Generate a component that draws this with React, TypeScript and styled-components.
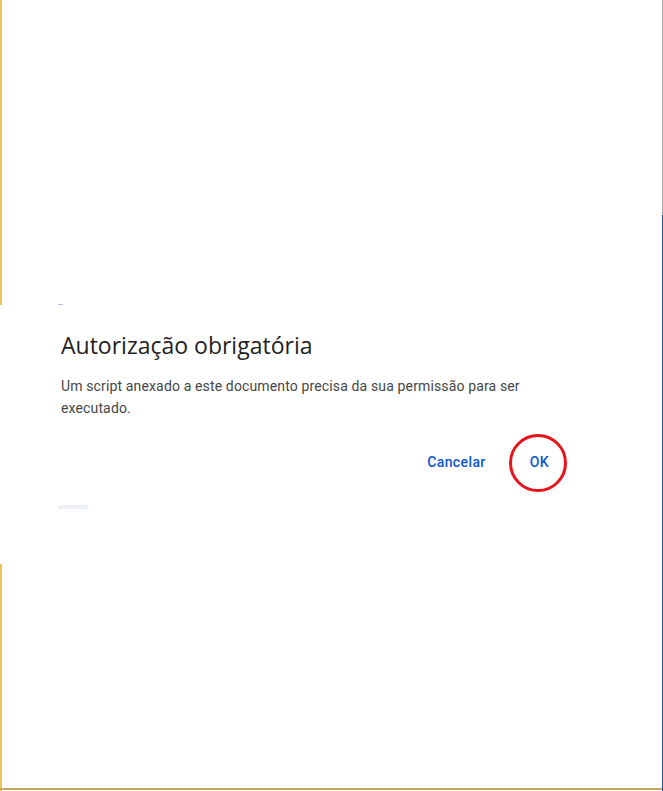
import React from "react";
import styled, { createGlobalStyle } from "styled-components";

const Global = createGlobalStyle`
  html, body { margin: 0; padding: 0; background: #ffffff; }
  body { font-family: Roboto, "Liberation Sans", sans-serif; }
`;

const Frame = styled.div`
  position: relative;
  width: 663px;
  height: 791px;
  background: #ffffff;
  overflow: hidden;
  display: flex;
  flex-direction: column;
`;

const Edge = styled.div<{ $side: "left" | "right" | "bottom"; $from: number; $to: number; $color: string }>`
  position: absolute;
  background: ${(p) => p.$color};
  ${(p) =>
    p.$side === "bottom"
      ? `left: ${p.$from}px; width: ${p.$to - p.$from}px; bottom: 1px; height: 2px;`
      : `${p.$side}: 0; top: ${p.$from}px; height: ${p.$to - p.$from}px; width: ${p.$side === "left" ? 1.5 : 1}px;`}
`;

const Speck = styled.div`
  position: absolute;
  left: 58px;
  top: 304px;
  width: 5px;
  height: 1px;
  background: #b7bccb;
`;

const Dialog = styled.div`
  margin-top: 330px;
  padding: 0 102px 0 61px;
  display: flex;
  flex-direction: column;
`;

const Title = styled.h1`
  margin: 0;
  font-family: "Open Sans", Roboto, sans-serif;
  font-weight: 400;
  font-size: 23px;
  line-height: 30px;
  color: #1f1f1f;
`;

const Body = styled.p`
  margin: 15px 0 0;
  font-family: Roboto, "Liberation Sans", sans-serif;
  font-size: 14px;
  line-height: 22px;
  letter-spacing: 0.14px;
  color: #444746;
  max-width: 480px;
`;

const Actions = styled.div`
  margin-top: 23px;
  display: flex;
  justify-content: flex-end;
  align-items: center;
  gap: 20px;
`;

const TextButton = styled.button`
  position: relative;
  height: 40px;
  padding: 0 12px;
  border: none;
  background: transparent;
  font-family: Roboto, "Liberation Sans", sans-serif;
  font-weight: 500;
  font-size: 14px;
  letter-spacing: 0.4px;
  color: #0b57d0;
  cursor: pointer;
`;

const Ring = styled.span`
  position: absolute;
  left: 50%;
  top: 50%;
  width: 52px;
  height: 52px;
  margin-left: -30px;
  margin-top: -28px;
  border: 3px solid #e8141c;
  border-radius: 50%;
  pointer-events: none;
`;

const Placeholder = styled.div`
  margin: 23px 0 0 -3px;
  width: 30px;
  height: 4px;
  background: #edf1f7;
`;

export default function App() {
  return (
    <>
      <Global />
      <Frame>
        <Edge $side="left" $from={0} $to={305} $color="#eec45a" />
        <Edge $side="left" $from={564} $to={791} $color="#eec45a" />
        <Edge $side="right" $from={0} $to={215} $color="#a9a9a9" />
        <Edge $side="right" $from={215} $to={791} $color="#1d4f9c" />
        <Edge $side="bottom" $from={0} $to={662} $color="#c4a860" />
        <Speck />
        <Dialog>
          <Title>Autorização obrigatória</Title>
          <Body>Um script anexado a este documento precisa da sua permissão para ser executado.</Body>
          <Actions>
            <TextButton>Cancelar</TextButton>
            <TextButton>
              OK
              <Ring />
            </TextButton>
          </Actions>
          <Placeholder />
        </Dialog>
      </Frame>
    </>
  );
}
